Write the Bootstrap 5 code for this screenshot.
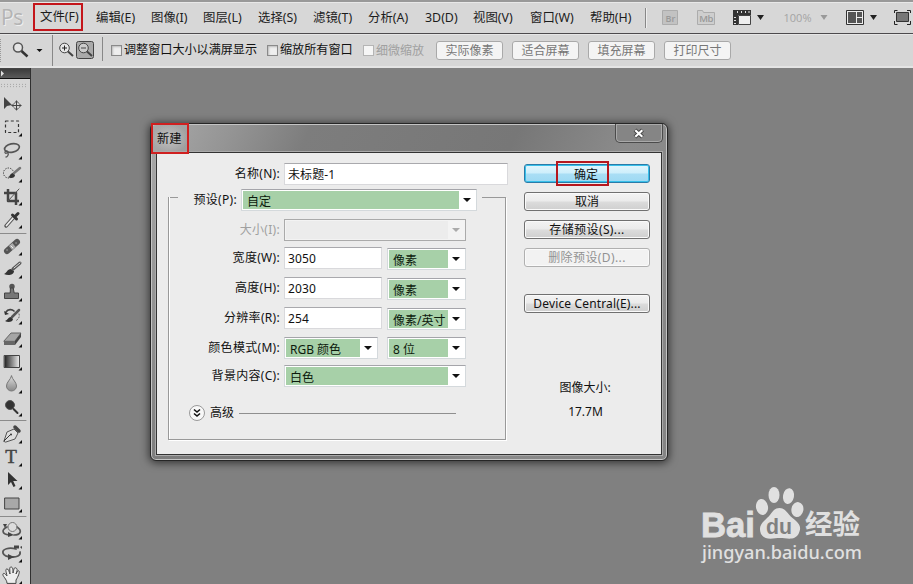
<!DOCTYPE html>
<html lang="zh-CN">
<head>
<meta charset="utf-8">
<title>新建</title>
<link href="https://cdn.jsdelivr.net/npm/bootstrap@5.3.0/dist/css/bootstrap.min.css" rel="stylesheet">
<style>
body{width:913px;height:584px;overflow:hidden;background:#808080;color:#111;font-family:"Noto Sans","Noto Sans CJK SC",sans-serif;font-size:12px;line-height:1;white-space:nowrap}
svg{display:block;flex:none}
.menubar{height:34px;background:#d7d7d7;border-top:2px solid #999;box-shadow:inset 0 1px #e8e8e8;border-bottom:1px solid #4c4a4d;font-size:12.4px;color:#1c1c1c}
.pslogo{width:33px;font:21px/1 "Open Sans",sans-serif;color:#b4b4b4;text-shadow:1px 1px #eee;padding-left:1px;letter-spacing:-.5px}
.mi{padding-top:1px}
.m1{width:50px;height:28px;border:2px solid #c4161c;padding:2px 0 0 5px;margin:-2px 13px 0 0}
.m55{width:55px}.m52{width:52px}.m57{width:57px}.m48{width:48px}.m60{width:60px}
.vline{width:1px;background:#888;box-shadow:1px 0 #eee}
.optbar{height:34px;background:#d6d6d6;border-top:1px solid #e6e6e6;border-bottom:2px solid #e4e4e4}
.chk{width:11px;height:11px;border:1px solid #8a8a8a;background:#eee;box-shadow:inset 1px 1px 2px #bbb}
.chk.off{border-color:#b5b5b5;background:#f6f6f6;box-shadow:none}
.ob{width:67px;height:19px;border:1px solid #a9a9a9;border-radius:3px;background:#f4f4f4;color:#777;margin-right:9px}
.dim{color:#a0a0a0}
.toolpanel{width:31px;height:516px;background:#d6d6d6;border-right:1px solid #303030;overflow:hidden}
.phead{height:11px;background:linear-gradient(#3c3c3c,#5a5a5a);border-bottom:1px solid #111;border-top:1px solid #444}
.grip{height:5px;width:26px;margin-top:4px;background:radial-gradient(#999 .7px,transparent 1px) 0 0/3px 2.5px}
.dlg{left:150px;top:123px;width:518px;height:338px;border:1px solid #262626;border-radius:6px;background:#858585;background-image:linear-gradient(115deg,#aaa 0,#959595 12%,#7d7d7d 24%,#777 55%,#8b8b8b 72%,#858585 100%);box-shadow:inset 0 0 0 1px #c4c4c4,0 1px 8px 1px rgba(0,0,0,.6)}
.dtitle{height:28px}
.newmark{width:38px;height:31px;margin-top:-1px;border:2px solid #d02020;padding:1px 0 0 4px;font-size:12.2px;background:radial-gradient(rgba(220,220,220,.55),transparent 75%);z-index:2}
.closeb{width:48px;height:19px;margin-right:4px;border:1px solid #4b4b4b;border-top:0;border-radius:0 0 5px 5px;background:#858585;box-shadow:inset 0 0 0 1px #a9a9a9}
.dbody{margin:0 5px;height:303px;border:1px solid #333;background:#ececec;outline:1px solid #aaa}
.leftcol{width:349px;padding:10px 0 0 11px}
.rw{display:flex}
.lb{text-align:right;width:112px;padding-top:5px;margin-right:4px;flex:none;letter-spacing:.3px}
.inp{height:22px;background:#fff;border:1px solid #d9d9dc;border-top-color:#a9a9ad;padding:5px 0 0 3px;letter-spacing:.1px}
.inp.full{width:224px;margin-right:-2px}.inp.num{width:98px;margin-right:5px}
.sel{height:22px;background:#fff;border:1px solid #d4d9dc;border-top-color:#a5a5aa;padding:1px}
.sel>b{font-weight:400;flex:1;background:#a7d0a8;padding:5px 0 0 4px;color:#0c1a0c;overflow:hidden}
.sel>i{width:16px;flex:none;display:flex;align-items:center}
.sel>i::after{content:"";display:block;width:0;height:0;border:4px solid transparent;border-top-color:#111;border-bottom:0;margin:auto}
.sel.off{background:#f3f3f3;border-color:#aaa}.sel.off>b{background:#ececec}.sel.off>i::after{border-top-color:#aaa}
.sel.drop1{margin-top:1px}
.w236{width:236px}.w182{width:182px}.w79{width:79px}.w94{width:94px;margin-right:9px}
.fs{display:flow-root;width:338px;height:243px;margin-top:12px;border:1px solid #999;border-top:0;box-shadow:1px 1px #fff,inset 1px 0 #fff;background:linear-gradient(#999,#999) 0 0/9px 1px no-repeat,linear-gradient(#999,#999) 100% 0/23px 1px no-repeat}
.fs .rw{height:30px}
.fs .lb{width:111px}
.fs .first{margin-top:-8px}
.fs .first .lb{width:68px}
.fs .h28{height:28px}
.pb{width:126px;height:19px;border:1px solid #707070;border-radius:3px;background:linear-gradient(#f3f3f3,#ebebeb 48%,#dcdcdc 52%,#cfcfcf);box-shadow:inset 0 0 0 1px #fafafa;margin-bottom:9px;padding-top:1px;color:#111}
.wide{letter-spacing:.4px}
.pb.ok{border-color:#2a7ba8;padding-top:0;background:linear-gradient(#e2f6fd,#cdeefb 48%,#a9def5 52%,#9ed9f3);box-shadow:inset 0 0 0 1px #38c0ea}
.pb.off{border-color:#b0b0b0;background:#f2f2f2;color:#929292}
.okmark{width:53px;height:25px;border:2px solid #b5171e;flex:none;margin-left:-9px;padding:2px 0 0 7px}
.rightcol{width:126px;margin-left:18px;padding-top:11px}
.imgsize{margin:69px 4px 0 0}
.advline{width:217px;height:1px;background:#8f8f8f;margin-left:5px}
.wm{left:698px;top:482px}
</style>
<script src="https://cdn.jsdelivr.net/npm/bootstrap@5.3.0/dist/js/bootstrap.bundle.min.js"></script>
</head>
<body>
<header class="menubar d-flex align-items-center">
  <div class="pslogo">Ps</div>
  <div class="m1 d-flex align-items-center">文件(F)</div>
  <div class="mi m55">编辑(E)</div><div class="mi m52">图像(I)</div><div class="mi m55">图层(L)</div><div class="mi m55">选择(S)</div><div class="mi m55">滤镜(T)</div><div class="mi m57">分析(A)</div><div class="mi m48">3D(D)</div><div class="mi m57">视图(V)</div><div class="mi m60">窗口(W)</div><div class="mi m55">帮助(H)</div>
  <div class="vline" style="height:20px"></div>
  <svg width="267" height="30" viewBox="646 3 267 30" font-family="Open Sans,sans-serif">
    <g fill="#c2c2c2" stroke="#acacac"><path d="M662.500 10.500h15v14h-15z"/><path d="M697.500 24.500v-14h5l1 2h11v12z" fill="#cecece"/></g>
    <text x="665.500" y="21.500" font-size="9" font-weight="600" fill="#999">Br</text><text x="699.300" y="22" font-size="9.500" font-weight="600" fill="#999" textLength="14">Mb</text>
    <path d="M733 10h18v5h-13v10h-5z" fill="#333"/><path d="M738.500 15.500h12v9h-12z" fill="#eee" stroke="#444"/><path d="M737.500 11v2M741.500 11v2M745.500 11v2M749 11v2M734 17.500h2M734 20.500h2M734 23.500h2" stroke="#ddd"/>
    <path d="M757 15h7l-3.500 5zM870 15h7l-3.500 5z" fill="#222"/><path d="M820.500 15h7l-3.500 5z" fill="#999"/>
    <text x="783.500" y="22" font-size="11" fill="#a4a4a4" textLength="28">100%</text>
    <path d="M846.500 10.500h17v14h-17z" fill="#eee" stroke="#333"/><path d="M848 12h8v11h-8zM857 12h5v5h-5zM857 18h5v5h-5z" fill="#555"/>
    <path d="M894.500 13v-2.500h3M907 10.500h3.500v2.500M910.500 21v3.500h-3.500M897.500 24.500h-3v-3.500" stroke="#222" fill="none"/><path d="M896.500 12.500h12v9h-12z" fill="#777" stroke="#333"/>
  </svg>
</header>
<div class="optbar d-flex align-items-center">
  <svg width="103" height="31" viewBox="0 35 103 31" fill="none">
    <path d="M.5 39v23" stroke="#999" stroke-dasharray="1 1"/>
    <circle cx="18" cy="47.500" r="4.500" stroke="#555" stroke-width="1.500" fill="#e5e5e5"/><path d="M21.500 51l6 5.500" stroke="#333" stroke-width="2.500"/>
    <path d="M36.500 49h6l-3 3z" fill="#111"/><path d="M52.500 35v31" stroke="#888"/>
    <rect x="76.500" y="41.500" width="17" height="17" rx="2" fill="#aaa" stroke="#444"/>
    <g stroke="#444"><circle cx="64.500" cy="48" r="4.800" fill="#e8e8e8"/><path d="M62 48h5M64.500 45.500v5" stroke="#222"/><circle cx="83.500" cy="48" r="4.800" fill="#ccc"/><path d="M81 48h5"/><path d="M68 51.500l5 4.500M87 51.500l5 4.500" stroke-width="2"/></g>
    <path d="M102.500 37v24" stroke="#888"/>
  </svg>
  <div class="chk" style="margin-left:8px"></div><span style="width:145px;padding-left:2px;font-size:12.1px">调整窗口大小以满屏显示</span>
  <div class="chk"></div><span style="width:85px;padding-left:2px;font-size:12.1px">缩放所有窗口</span>
  <div class="chk off"></div><span class="dim" style="width:63px;padding-left:2px">细微缩放</span>
  <div class="ob d-flex align-items-center justify-content-center" style="margin-left:-1px">实际像素</div><div class="ob d-flex align-items-center justify-content-center">适合屏幕</div><div class="ob d-flex align-items-center justify-content-center">填充屏幕</div><div class="ob d-flex align-items-center justify-content-center">打印尺寸</div>
</div>

<aside class="toolpanel d-flex flex-column">
  <div class="phead"><svg width="5" height="8"><path d="M1 1.500l3 3-3 3z" fill="#ddd"/></svg></div>
  <div class="grip"></div>
  <svg width="30" height="492" viewBox="0 92 30 492" fill="none" stroke-linecap="round" stroke-linejoin="round" style="margin-top:4px">
    <defs><linearGradient id="gr"><stop stop-color="#222"/><stop offset="1" stop-color="#eee"/></linearGradient><linearGradient id="gv" x2="0" y2="1"><stop stop-color="#ddd"/><stop offset="1" stop-color="#888"/></linearGradient></defs>
    <path d="M4 97v12l3-3 5-1z" fill="#444"/><path d="M12 105.500h9M16.500 101v9M14.700 102.800l1.800-1.800 1.800 1.800M14.700 108.200l1.800 1.800 1.800-1.800M13.800 103.700l-1.800 1.800 1.800 1.800M19.200 103.700l1.800 1.800-1.800 1.800" stroke="#444"/>
    <path d="M5.500 121h13v11.500h-13z" stroke="#333" stroke-width="1.200" stroke-dasharray="3 2.300" stroke-linecap="butt"/>
    <ellipse cx="12" cy="148" rx="7.500" ry="4.200" transform="rotate(-12 12 148)" stroke="#555" stroke-width="1.700"/><path d="M6 151c-2 1-1 3 1 2s1-2-1-2M8 153c1 2-1 4-2 4" stroke="#555" stroke-width="1.300"/>
    <circle cx="8.500" cy="173" r="5" stroke="#333" stroke-dasharray=".5 2"/><path d="M8 177c2 0 2-4 5-4l2 2c0 3-4 4-7 2z" fill="#333"/><path d="M14 173l6-5" stroke="#777" stroke-width="2.500"/>
    <path d="M8 189v12h11M4 193h12v12" stroke="#444" stroke-width="2.500" stroke-linecap="butt"/><path d="M8 201l11-12" stroke="#555"/>
    <path d="M6 226l8-9" stroke="#555" stroke-width="3.500"/><path d="M6.500 225.500l7-8" stroke="#eee" stroke-width="1.700"/><path d="M12.500 215l4 4M15.500 216l2.500-2.500" stroke="#333" stroke-width="3"/>
    <path d="M0 233.500h26M0 420.500h26M0 516.500h26" stroke="#8b8b8b"/>
    <path d="M7 251l10-9" stroke="#555" stroke-width="6"/><path d="M10.500 248l3.500-3" stroke="#aaa" stroke-width="5" stroke-linecap="butt"/><path d="M11 246l2 2M7 250h.1M16 243h.1" stroke="#eee"/>
    <path d="M4 274c3-1 3-5 7-5l3 2c0 4-6 5-10 3z" fill="#333"/><path d="M13 269l7-6" stroke="#555" stroke-width="3"/><path d="M14 268l6-5" stroke="#ddd"/>
    <circle cx="12" cy="286.500" r="2.700" fill="#555"/><path d="M10.800 288h2.400l1 5h4.300v5.500h-14v-5.500h5.300z" fill="#777" stroke="#444"/>
    <path d="M5 321c3-1 3-4 6-4l2 2c0 3-5 4-8 2z" fill="#333"/><path d="M12 317l7-7" stroke="#555" stroke-width="2.500"/><path d="M6 312c2-3 6-3 8-1" stroke="#444" stroke-width="1.700"/><path d="M4 311l5 3-4 1z" fill="#333"/><path d="M19 314c1 3-1 6-4 7" stroke="#555" stroke-dasharray="1 2"/>
    <path d="M4 341l7-8h10l-6 8z" fill="#a5a5a5" stroke="#666"/><path d="M4 341h11v4h-11z" fill="#666"/><path d="M15 341l6-8v4l-6 8z" fill="#444"/>
    <path d="M4.500 355.500h15v12h-15z" fill="url(#gr)" stroke="#444"/>
    <path d="M11.500 376c1 4 5 6 5 10a5 5 0 0 1-10 0c0-4 4-6 5-10z" fill="url(#gv)" stroke="#777"/>
    <circle cx="10" cy="405" r="4.500" fill="#333" stroke="#555"/><path d="M13.500 409l4 4" stroke="#333" stroke-width="2"/>
    <path d="M4 441l3-9 7-3 4 4-3 6-9 3z" fill="#ddd" stroke="#555"/><path d="M4 441l6-6" stroke="#333"/><circle cx="11" cy="434.500" r="1" fill="#333"/><path d="M15 427l4 4" stroke="#444" stroke-width="3.500"/>
    <text x="5.200" y="463" font-family="Liberation Serif,serif" font-size="19" fill="#444" stroke="#444" stroke-width=".5" textLength="13">T</text>
    <path d="M8 472v13l3-3 2.500 5 2-1-2.300-5h4.300z" fill="#333"/>
    <path d="M5 498h14v11h-14z" fill="#a8a8a8" stroke="#444"/>
    <path d="M7 527c-6 3-5 7 2 8M17 527c6 4 3 8-3 8" stroke="#555" stroke-width="1.700"/><path d="M8 532l6 3-6 2zM7 524l-4 0 2 4z" fill="#444"/><circle cx="12.500" cy="527" r="4.500" fill="#ddd" stroke="#777"/>
    <path d="M16 549c-7-2-14 0-13 4s7 4 10 4 8-1 7-5" stroke="#555" stroke-width="1.800"/><path d="M8 554l6 3-6 3z" fill="#444"/><path d="M14 545.500h5v3h-5zM20 547l2-1v3z" fill="#444"/>
    <path d="M7 583c0-4-5-7-4-9s3 1 4 2c-1-5-2-7 0-7s2 3 3 5c0-4-1-7 1-7s2 3 2 6c1-4 1-6 3-5s1 3 0 6c1-2 2-4 3-3s-1 6-3 9v3z" fill="#eee" stroke="#444"/>
    <g fill="#111"><path id="tc" d="M22 133v3.500h-3.500z"/><use href="#tc" y="23"/><use href="#tc" y="46"/><use href="#tc" y="69"/><use href="#tc" y="92"/><use href="#tc" y="119"/><use href="#tc" y="142"/><use href="#tc" y="165"/><use href="#tc" y="188"/><use href="#tc" y="211"/><use href="#tc" y="234"/><use href="#tc" y="257"/><use href="#tc" y="280"/><use href="#tc" y="307"/><use href="#tc" y="330"/><use href="#tc" y="353"/><use href="#tc" y="376"/><use href="#tc" y="403"/><use href="#tc" y="426"/><use href="#tc" y="448"/></g>
  </svg>
</aside>

<section class="dlg position-absolute">
  <div class="dtitle d-flex justify-content-between align-items-start">
    <div class="newmark position-relative d-flex align-items-center">新建</div>
    <div class="closeb d-flex align-items-center justify-content-center"><svg width="12" height="11" viewBox="0 0 12 11"><path d="M2 2l7.500 7M9.500 2l-7.500 7" stroke="#444" stroke-width="4"/><path d="M2.300 2.300l7 6.400M9.300 2.300l-7 6.400" stroke="#fff" stroke-width="2.200"/></svg></div>
  </div>
  <div class="dbody d-flex">
    <div class="leftcol">
      <div class="rw"><div class="lb">名称(N):</div><div class="inp full">未标题-1</div></div>
      <div class="fs">
        <div class="rw first"><div class="lb">预设(P):</div><div class="sel w236 d-flex"><b>自定</b><i></i></div></div>
        <div class="rw h28"><div class="lb dim">大小(I):</div><div class="sel off w182 d-flex"><b></b><i></i></div></div>
        <div class="rw"><div class="lb">宽度(W):</div><div class="inp num">3050</div><div class="sel w79 drop1 d-flex"><b>像素</b><i></i></div></div>
        <div class="rw"><div class="lb">高度(H):</div><div class="inp num">2030</div><div class="sel w79 drop1 d-flex"><b>像素</b><i></i></div></div>
        <div class="rw"><div class="lb">分辨率(R):</div><div class="inp num">254</div><div class="sel w79 drop1 d-flex"><b>像素/英寸</b><i></i></div></div>
        <div class="rw h28"><div class="lb">颜色模式(M):</div><div class="sel w94 d-flex"><b>RGB 颜色</b><i></i></div><div class="sel w79 d-flex"><b>8 位</b><i></i></div></div>
        <div class="rw"><div class="lb">背景内容(C):</div><div class="sel w182 d-flex"><b>白色</b><i></i></div></div>
        <div class="d-flex align-items-center" style="padding:9px 0 0 20px">
          <svg width="17" height="18" viewBox="0 0 17 18" fill="none"><circle cx="8" cy="9" r="7.500" fill="#f8f8f8" stroke="#999"/><path d="M5 5.500l3 2.500 3-2.500M5 9.500l3 2.500 3-2.500" stroke="#111" stroke-width="1.600"/></svg>
          <span style="margin-left:4px">高级</span><div class="advline"></div>
        </div>
      </div>
    </div>
    <div class="rightcol">
      <div class="pb ok d-flex align-items-center justify-content-center"><span class="okmark d-flex align-items-center justify-content-center">确定</span></div>
      <div class="pb d-flex align-items-center justify-content-center">取消</div>
      <div class="pb wide d-flex align-items-center justify-content-center">存储预设(S)...</div>
      <div class="pb wide off d-flex align-items-center justify-content-center">删除预设(D)...</div>
      <div class="pb d-flex align-items-center justify-content-center" style="margin-top:27px;letter-spacing:.15px">Device Central(E)...</div>
      <div class="text-center imgsize">图像大小:</div>
      <div class="text-center" style="margin:12px 3px 0 0">17.7M</div>
    </div>
  </div>
</section>

<svg class="wm position-absolute" width="170" height="90" viewBox="698 482 170 90" fill="#e0e0e0">
  <text x="701" y="537" font-family="Liberation Sans,sans-serif" font-weight="700" font-size="35" stroke="#e0e0e0" stroke-width=".8" textLength="54" lengthAdjust="spacingAndGlyphs">Bai</text>
  <ellipse cx="762" cy="507" rx="6" ry="8" transform="rotate(-10 762 507)"/><ellipse cx="774" cy="495" rx="5.500" ry="8"/><ellipse cx="788.500" cy="496" rx="5.500" ry="8" transform="rotate(10 788 496)"/><ellipse cx="797.500" cy="509.500" rx="6" ry="7.500" transform="rotate(10 797 509)"/>
  <path d="M779.500 508c6 0 8 6 13 10 6 5 10 8 6 16-4 7-12 4-18.500 4s-15 3-19-4c-3-8 1-11 6-16 5-4 6-10 12.500-10z"/>
  <text x="766" y="534" font-family="Liberation Sans,sans-serif" font-weight="700" font-size="22" fill="#808080" textLength="26" lengthAdjust="spacingAndGlyphs">du</text>
  <text x="805" y="534" font-family="Noto Sans CJK SC,sans-serif" font-weight="700" font-size="27" textLength="55" lengthAdjust="spacingAndGlyphs">经验</text>
  <text x="702" y="559" font-family="Noto Sans,sans-serif" font-weight="500" font-size="18.500" textLength="160" lengthAdjust="spacingAndGlyphs">jingyan.baidu.com</text>
</svg>
</body>
</html>
